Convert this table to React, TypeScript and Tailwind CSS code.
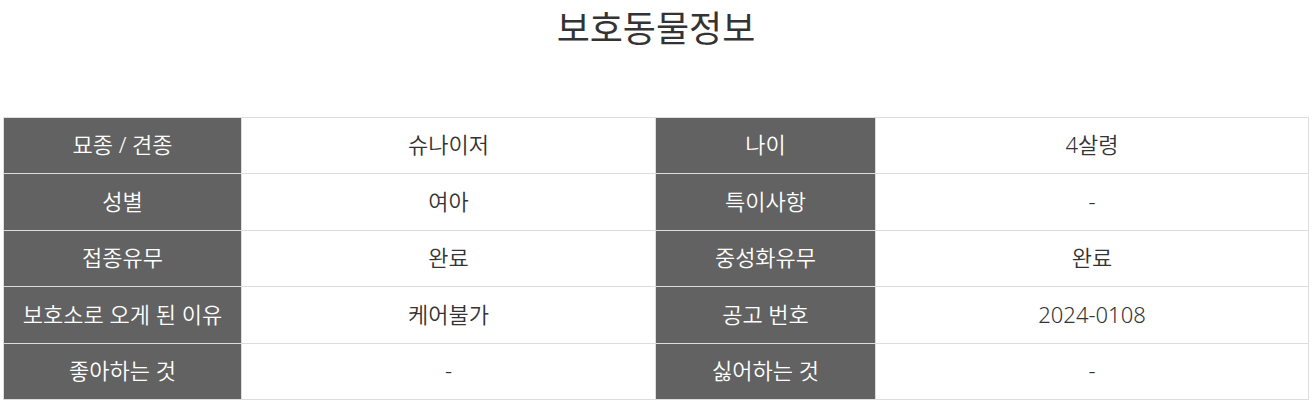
import React from 'react';

// 보호동물 상세 정보 표
interface InfoRow {
  label1: string;
  value1: string;
  label2: string;
  value2: string;
}

const rows: InfoRow[] = [
  { label1: '묘종 / 견종', value1: '슈나이저', label2: '나이', value2: '4살령' },
  { label1: '성별', value1: '여아', label2: '특이사항', value2: '-' },
  { label1: '접종유무', value1: '완료', label2: '중성화유무', value2: '완료' },
  { label1: '보호소로 오게 된 이유', value1: '케어불가', label2: '공고 번호', value2: '2024-0108' },
  { label1: '좋아하는 것', value1: '-', label2: '싫어하는 것', value2: '-' }
];

const rowHeights = ['h-[56px]', 'h-[57px]', 'h-[56px]', 'h-[57px]', 'h-[56px]'];

const App: React.FC = () => {
  return (
    <div className="w-[1312px] h-[405px] bg-white font-['Noto_Sans','Noto_Sans_CJK_KR',sans-serif] overflow-hidden">
      <h2 className="text-center text-[36px] leading-none text-[#333] pt-[11px] font-normal">
        보호동물정보
      </h2>

      <table className="mt-[70px] ml-[3px] w-[1305px] border-collapse table-fixed">
        <colgroup>
          <col className="w-[238px]" />
          <col className="w-[414px]" />
          <col className="w-[220px]" />
          <col className="w-[433px]" />
        </colgroup>
        <tbody>
          {rows.map((row, index) => (
            <tr key={index} className={rowHeights[index]}>
              <th className="bg-[#626262] border border-[#dddddd] text-white text-[22px] font-[350] text-center p-0 pb-[2px]">
                {row.label1}
              </th>
              <td className="border border-[#dddddd] text-[#333] text-[22px] font-[350] text-center p-0 pb-[2px]">
                {row.value1}
              </td>
              <th className="bg-[#626262] border border-[#dddddd] text-white text-[22px] font-[350] text-center p-0 pb-[2px]">
                {row.label2}
              </th>
              <td className="border border-[#dddddd] text-[#333] text-[22px] font-[350] text-center p-0 pb-[2px]">
                {row.value2}
              </td>
            </tr>
          ))}
        </tbody>
      </table>
    </div>
  );
};

export default App;
